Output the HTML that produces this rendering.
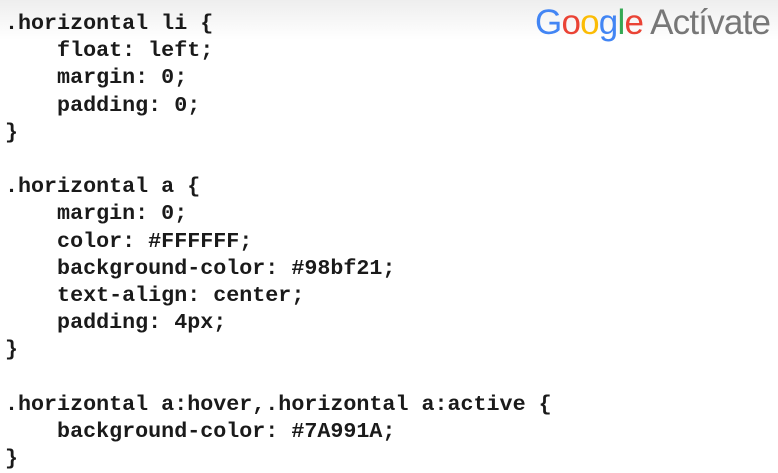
<!DOCTYPE html>
<html><head><meta charset="utf-8"><style>
html,body{margin:0;padding:0;}
body{width:778px;height:473px;overflow:hidden;background:linear-gradient(#eeeeee 0px,#ffffff 40px,#ffffff);position:relative;}
pre{margin:0;position:absolute;left:5px;top:10px;font-family:"Liberation Mono",monospace;font-weight:bold;font-size:21.7px;line-height:27.2px;color:#1a1a1a;}
.logo{position:absolute;left:535px;top:3px;font-family:"Liberation Sans",sans-serif;font-size:35px;letter-spacing:-0.8px;white-space:nowrap;}
</style></head><body>
<pre>.horizontal li {
    float: left;
    margin: 0;
    padding: 0;
}

.horizontal a {
    margin: 0;
    color: #FFFFFF;
    background-color: #98bf21;
    text-align: center;
    padding: 4px;
}

.horizontal a:hover,.horizontal a:active {
    background-color: #7A991A;
}</pre>
<div class="logo"><span style="color:#4285f4">G</span><span style="color:#ea4335">o</span><span style="color:#fbbc05">o</span><span style="color:#4285f4">g</span><span style="color:#34a853">l</span><span style="color:#ea4335">e</span> <span style="color:#777">Actívate</span></div>
</body></html>
